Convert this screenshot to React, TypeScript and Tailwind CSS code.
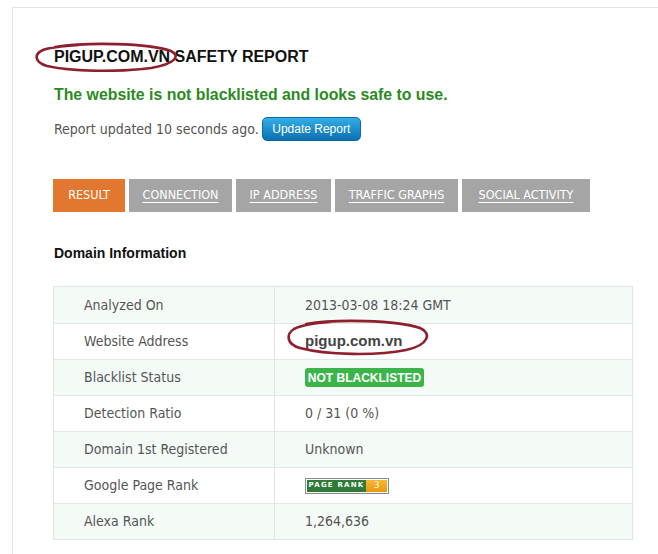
import React from "react";

function PageRank() {
  return (
    <div className="flex h-[16px] w-[84px] border border-[#8a8a8a] bg-white p-[1px]">
      <div className="flex w-[59px] items-center justify-center whitespace-nowrap bg-[#2f7a37] text-[7px] font-bold leading-none tracking-[1.2px] text-white [font-family:'DejaVu_Sans',sans-serif]">
        PAGE RANK
      </div>
      <div className="flex flex-1 items-center justify-center bg-gradient-to-b from-[#f6b733] to-[#e99a0e] text-[9px] leading-none text-[#fff6d0] [font-family:'DejaVu_Sans',sans-serif]">
        3
      </div>
    </div>
  );
}

export default function App() {
  const tableFont = "[font-family:'DejaVu_Sans_Condensed','DejaVu_Sans',sans-serif]";
  const data = [
    { label: "Analyzed On", value: <span>2013-03-08 18:24 GMT</span> },
    {
      label: "Website Address",
      value: (
        <span className="relative inline-block">
          <span className="font-bold text-[#444] [font-family:'Liberation_Sans',Arial,sans-serif] text-[15px]">pigup.com.vn</span>
          <svg
            className="pointer-events-none absolute left-[-19px] top-[-12px]"
            width="144"
            height="38"
            viewBox="0 0 144 38"
          >
            <path
              d="M20 6 C 50 1, 110 2, 134 10 C 146 15, 143 27, 120 32 C 90 38, 40 37, 14 30 C 0 26, 0 16, 8 11 C 14 8, 28 5, 44 4"
              fill="none"
              stroke="#8e1f2e"
              strokeWidth="2.6"
              strokeLinecap="round"
            />
          </svg>
        </span>
      ),
    },
    {
      label: "Blacklist Status",
      value: (
        <span className="inline-flex h-[19px] w-[119px] items-center justify-center rounded-[3px] bg-[#3bb54a] text-[12px] font-bold text-white [font-family:'Liberation_Sans',Arial,sans-serif]">
          NOT BLACKLISTED
        </span>
      ),
    },
    { label: "Detection Ratio", value: <span>0 / 31 (0 %)</span> },
    { label: "Domain 1st Registered", value: <span>Unknown</span> },
    { label: "Google Page Rank", value: <PageRank /> },
    { label: "Alexa Rank", value: <span>1,264,636</span> },
  ];

  const tabs = [
    { t: "RESULT", w: "w-[72px]", active: true },
    { t: "CONNECTION", w: "w-[103px]", active: false },
    { t: "IP ADDRESS", w: "w-[95px]", active: false },
    { t: "TRAFFIC GRAPHS", w: "w-[123px]", active: false },
    { t: "SOCIAL ACTIVITY", w: "w-[128px]", active: false },
  ];

  return (
    <div className="h-[554px] w-[658px] overflow-hidden bg-white pl-[12px] pt-[7px]">
      <div className="h-[600px] border-l border-t border-[#e3e3e3] pl-[40px] pt-[39px]">
        {/* Title */}
        <div className="relative h-[20px] text-[16px] font-bold leading-[20px] text-[#111] [font-family:'Liberation_Sans',Arial,sans-serif]">
          <span className="pl-[1px]">PIGUP.COM.VN SAFETY REPORT</span>
          <svg
            className="pointer-events-none absolute left-[-20px] top-[-5px]"
            width="146"
            height="30"
            viewBox="0 0 146 30"
          >
            <path
              d="M22 5 C 55 0, 115 1, 138 9 C 148 14, 142 22, 118 26 C 88 30, 40 30, 14 24 C 1 20, 1 12, 10 8 C 18 5, 32 4, 46 3"
              fill="none"
              stroke="#8e1f2e"
              strokeWidth="2.6"
              strokeLinecap="round"
            />
          </svg>
        </div>

        {/* Safe message */}
        <div className="mt-[18px] pl-[1px] text-[15.85px] font-bold leading-[20px] text-[#2b8a24] [font-family:'Liberation_Sans',Arial,sans-serif]">
          The website is not blacklisted and looks safe to use.
        </div>

        {/* Update row */}
        <div className="mt-[12px] flex h-[24px] items-center">
          <span className={`pl-[1px] text-[14px] text-[#555] ${tableFont}`}>
            Report updated 10 seconds ago.
          </span>
          <button className="ml-[3px] h-[24px] w-[99px] rounded-[5px] border border-[#0b6aa6] bg-gradient-to-b from-[#33aee6] to-[#0a70b2] text-[12px] text-white [font-family:'Liberation_Sans',Arial,sans-serif]">
            Update Report
          </button>
        </div>

        {/* Tabs */}
        <div className="mt-[38px] flex gap-1">
          {tabs.map((tab) => (
            <div
              key={tab.t}
              className={`flex h-[33px] items-center justify-center text-[12.5px] text-white ${tab.w} ${tableFont} ${
                tab.active ? "bg-[#e2772f]" : "bg-[#a5a5a5] underline underline-offset-[3px]"
              }`}
            >
              {tab.t}
            </div>
          ))}
        </div>

        {/* Domain Information */}
        <div className="mt-[32px] pl-[1px] text-[14px] font-bold leading-[18px] text-[#111] [font-family:'Liberation_Sans',Arial,sans-serif]">
          Domain Information
        </div>

        {/* Table */}
        <div className="mt-[24px] w-[580px] border border-[#dfe6e2]">
          {data.map((r, i) => (
            <div
              key={r.label}
              className={`flex h-[36px] ${i > 0 ? "border-t border-[#e1e7e3]" : ""} ${
                i % 2 === 0 ? "bg-[#f4faf6]" : "bg-white"
              } text-[14px] text-[#555] ${tableFont}`}
            >
              <div className="flex w-[221px] items-center border-r border-[#e1e7e3] pl-[30px]">
                {r.label}
              </div>
              <div className="flex flex-1 items-center pl-[30px]">{r.value}</div>
            </div>
          ))}
        </div>
      </div>
    </div>
  );
}
